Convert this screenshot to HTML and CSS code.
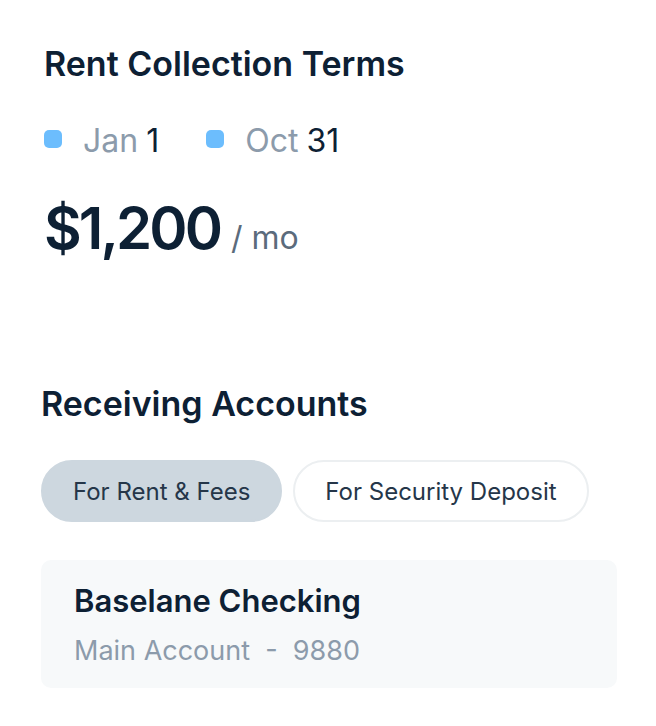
FILE: index.html
```html
<!DOCTYPE html>
<html lang="en">
<head>
  <meta charset="UTF-8" />
  <meta name="viewport" content="width=device-width, initial-scale=1.0" />
  <title>Rent Collection Terms</title>
  <link rel="stylesheet" href="styles.css">
</head>
<body>
  <div class="page">
    <!-- Terms -->
    <section class="terms">
      <h2 class="title">Rent Collection Terms</h2>
      <div class="dates">
        <span class="date"><span class="dot"></span><span class="month">Jan</span> 1</span>
        <span class="date"><span class="dot"></span><span class="month">Oct</span> 31</span>
      </div>
      <div class="amount">$1,200<span class="per">/ mo</span></div>
    </section>

    <!-- Accounts -->
    <section class="accounts">
      <h2 class="title">Receiving Accounts</h2>
      <div class="tabs">
        <button class="tab active">For Rent &amp; Fees</button>
        <button class="tab">For Security Deposit</button>
      </div>
      <div class="card">
        <div class="card-name">Baselane Checking</div>
        <div class="card-sub">Main Account&nbsp; - &nbsp;9880</div>
      </div>
    </section>
  </div>
</body>
</html>
```

FILE: styles.css
```css
* {
  margin: 0;
  padding: 0;
  box-sizing: border-box;
}
body {
  font-family: Inter, "Noto Sans", sans-serif;
  background: #fff;
  color: #0d2034;
}
.page {
  padding-top: 44px;
}
.title {
  font-size: 34px;
  line-height: 40px;
  font-weight: 600;
  letter-spacing: 0;
  color: #0d2034;
}
/* Terms */
.terms {
  padding-left: 44px;
}
.dates {
  display: flex;
  gap: 47px;
  margin-top: 39px;
  font-size: 32px;
  line-height: 36px;
}
.date {
  display: flex;
  align-items: center;
}
.dot {
  width: 18px;
  height: 18px;
  border-radius: 5px;
  background: #6cbdfd;
  margin-right: 21px;
  margin-bottom: 4px;
}
.month {
  color: #8c9bab;
  margin-right: 8px;
}
.amount {
  margin-top: 37px;
  font-size: 58px;
  line-height: 64px;
  font-weight: 600;
  letter-spacing: -0.05em;
}
.per {
  margin-left: 11px;
  font-size: 32px;
  font-weight: 400;
  letter-spacing: 0;
  color: #5b6b7c;
}
/* Accounts */
.accounts {
  padding-left: 41px;
  margin-top: 114px;
}
.tabs {
  display: flex;
  gap: 11px;
  margin-top: 36px;
}
.tab {
  height: 62px;
  padding: 0 30px;
  border-radius: 31px;
  border: 2px solid #eceff1;
  background: #fff;
  font-family: inherit;
  font-size: 24px;
  color: #253649;
}
.tab.active {
  background: #cdd7df;
  border-color: #cdd7df;
}
.card {
  width: 576px;
  margin-top: 38px;
  padding: 23px 33px 21px;
  background: #f7f9fa;
  border-radius: 10px;
}
.card-name {
  font-size: 31px;
  line-height: 36px;
  font-weight: 600;
}
.card-sub {
  margin-top: 16px;
  font-size: 27px;
  line-height: 32px;
  color: #8c9bab;
}
```
